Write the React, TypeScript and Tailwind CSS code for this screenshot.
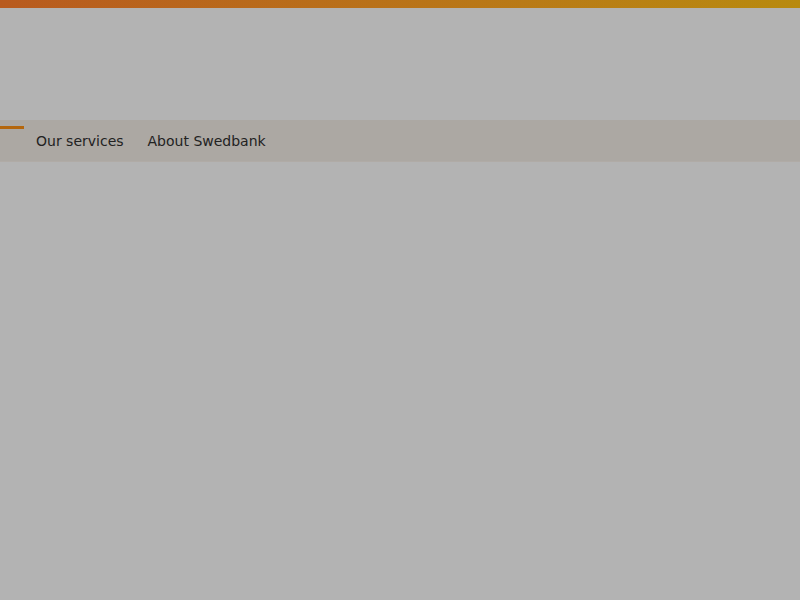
const links = ['Our services', 'About Swedbank'];

export default function App() {
  return (
    <div className="min-h-[600px] bg-[#b3b3b3]" style={{ fontFamily: '"DejaVu Sans", sans-serif' }}>
      <div className="h-2 bg-gradient-to-r from-[#b85a1e] to-[#b88a0e]" />
      <div className="h-[112px]" />
      <nav className="relative flex h-[42px] items-center gap-6 border-b border-[#b0aba6] bg-[#aca8a3] pl-9">
        <span className="absolute left-0 top-[6px] h-[3px] w-6 bg-[#b4660c]" />
        {links.map((l) => (
          <a key={l} className="text-sm text-[#222] cursor-pointer">
            {l}
          </a>
        ))}
      </nav>
    </div>
  );
}
